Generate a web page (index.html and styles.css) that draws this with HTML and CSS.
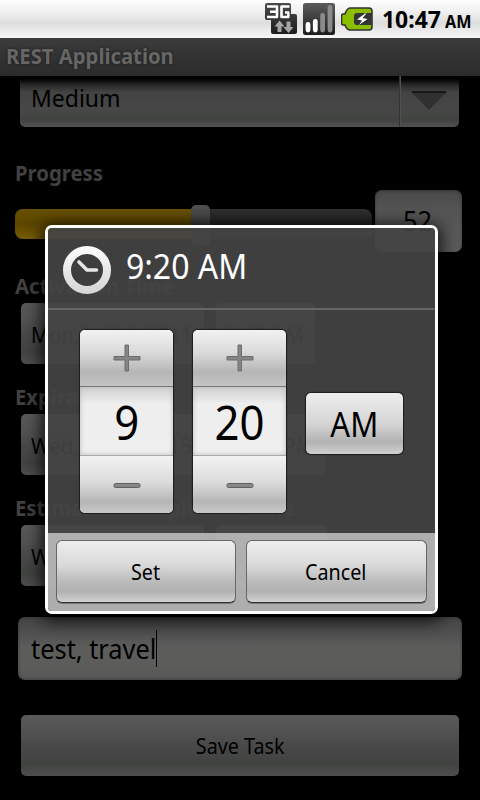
FILE: index.html
```html
<!DOCTYPE html>
<html lang="en">
<head>
<meta charset="utf-8">
<title>REST Application</title>
<link rel="stylesheet" href="styles.css">
</head>
<body>
<div class="phone">
  <header class="status">
    <svg class="status-icon" width="32" height="32" viewBox="0 0 32 32">
      <defs><linearGradient id="net" x2="0" y2="1"><stop offset="0" stop-color="#4c4c4c"/><stop offset="1" stop-color="#1c1c1c"/></linearGradient></defs>
      <path d="M2 0h22q2 0 2 2v9h4q2 0 2 2v16q0 2-2 2H8q-2 0-2-2v-12H2q-2 0-2-2V2q0-2 2-2z" fill="url(#net)"/>
      <path d="M2 3.500h10v10.500H2M5 8.700h7M24.500 3.500h-8v10.500h6.800v-4.500h-3.300" fill="none" stroke="#fff" stroke-width="2.600" stroke-linejoin="round"/>
      <path d="M14.500 17.500l5 6h-3v5.500h-4v-5.500h-3zM23.500 30l-5-6h3v-5.500h4v5.500h3z" fill="#a6a6a6"/>
    </svg>
    <svg class="status-icon" width="32" height="32" viewBox="0 0 32 32">
      <defs><linearGradient id="sig" x2="0" y2="1"><stop offset="0" stop-color="#5c5c5c"/><stop offset="1" stop-color="#1c1c1c"/></linearGradient></defs>
      <rect width="32" height="32" rx="2.500" fill="url(#sig)"/>
      <g stroke-width="4.800" stroke-linecap="round"><path d="M5 21.500v5.500M12.300 18.500v8.500" stroke="#fff"/><path d="M19.600 12.500v14.500M27 4.500v22.500" stroke="#8b8b8b"/></g>
    </svg>
    <svg class="battery" width="33" height="24" viewBox="0 0 33 24">
      <path d="M9 1h19q3 0 3 3v16q0 3-3 3H9q-3 0-5-5H2.500q-2 0-2-2V9q0-2 2-2H4q2-6 5-6z" fill="#8bbd00" stroke="#333" stroke-width="1.600"/>
      <path d="M16 6h15v12H16q-3 0-3-3V9q0-3 3-3z" fill="#343434"/>
      <path d="M24 6.500l-8 6 5 1-3 4.500 8.500-6-5-1 4-4.500z" fill="#fff"/>
    </svg>
    <span class="clock"><span class="t">10:47</span></span><span class="ampm"><span class="t">AM</span></span>
  </header>
  <div class="titlebar"><span class="t title">REST Application</span></div>
  <main class="form">
    <div class="spinner">
      <span class="t">Medium</span>
      <div class="spinner-arrow"><svg width="34" height="19" viewBox="0 0 34 19"><path d="M0 0h34v2L17 19 0 2z" fill="#303030"/><path d="M0 1h34" stroke="#171717" stroke-width="2"/></svg></div>
    </div>
    <div class="label l-progress"><span class="t">Progress</span></div>
    <div class="progress-row">
      <div class="seek"><div class="fill"></div><div class="thumb"></div></div>
      <div class="num"><span class="t">52</span></div>
    </div>
    <div class="label l-act"><span class="t">Activation Time</span></div>
    <div class="row"><div class="btn date"><span class="t">Mon, Jul 11, 2011</span></div><div class="btn time-a"><span class="t">9:00 AM</span></div></div>
    <div class="label"><span class="t">Expiration Time</span></div>
    <div class="row"><div class="btn date"><span class="t">Wed, Jul 15, 2015</span></div><div class="btn time-b"><span class="t">12:45 PM</span></div></div>
    <div class="label"><span class="t">Estimated Completion Time</span></div>
    <div class="row"><div class="btn date"><span class="t">Wed, Jul 13, 2011</span></div><div class="btn time-c"><span class="t">10:00 AM</span></div></div>
    <div class="input"><span class="t input-text">test, travel</span><i class="caret"></i></div>
    <div class="btn save"><span class="t">Save Task</span></div>
  </main>
  <section class="dialog">
    <div class="dialog-head">
      <svg width="48" height="48" viewBox="0 0 48 48">
        <defs><linearGradient id="ring" x2="0" y2="1"><stop offset="0" stop-color="#fafafa"/><stop offset="1" stop-color="#d8d8d8"/></linearGradient></defs>
        <circle cx="24" cy="24" r="20" fill="#3d3d3d" stroke="url(#ring)" stroke-width="8"/>
        <path d="M16 16l8 8h9.500" fill="none" stroke="#e6e6e6" stroke-width="3.600" stroke-linecap="round" stroke-linejoin="round"/>
      </svg>
      <span class="t dialog-title">9:20 AM</span>
    </div>
    <div class="dialog-body">
      <div class="picker">
        <div class="step plus"><svg width="28" height="28" viewBox="0 0 28 28"><path d="M12 1h3.500v11.500H27v3.500H15.500V27H12V16H1v-3.500h11z" fill="#858585" stroke="#6c6c6c" stroke-linejoin="round"/></svg></div>
        <div class="value"><span class="t">9</span></div>
        <div class="step minus"><svg width="28" height="6" viewBox="0 0 28 6"><rect x="1" y=".5" width="26" height="4" rx="1.500" fill="#888" stroke="#606060"/></svg></div>
      </div>
      <div class="picker">
        <div class="step plus"><svg width="28" height="28" viewBox="0 0 28 28"><path d="M12 1h3.500v11.500H27v3.500H15.500V27H12V16H1v-3.500h11z" fill="#858585" stroke="#6c6c6c" stroke-linejoin="round"/></svg></div>
        <div class="value"><span class="t">20</span></div>
        <div class="step minus"><svg width="28" height="6" viewBox="0 0 28 6"><rect x="1" y=".5" width="26" height="4" rx="1.500" fill="#888" stroke="#606060"/></svg></div>
      </div>
      <div class="toggle"><span class="t">AM</span></div>
    </div>
    <div class="dialog-foot">
      <div class="action set"><span class="t">Set</span></div>
      <div class="action cancel"><span class="t">Cancel</span></div>
    </div>
  </section>
</div>
</body>
</html>
```

FILE: styles.css
```css
* { box-sizing: border-box; }
body { margin: 0; background: #000; font-family: "Noto Sans", "Open Sans", sans-serif; }
svg { display: block; flex: none; }
.phone { position: relative; width: 480px; height: 800px; overflow: hidden; background: #000; display: flex; flex-direction: column; }
.t { display: inline-block; white-space: nowrap; transform: scaleX(.94); transform-origin: left center; }

.status { height: 38px; flex: none; display: flex; align-items: center; padding-left: 265px; background: linear-gradient(#fff, #ebebeb 40%, #dedede 60%, #f6f6f6); color: #000; font-weight: 700; }
.status-icon { margin-right: 6px; }
.battery { margin-right: 8px; }
.clock { width: 63px; font-size: 24px; line-height: 38px; }
.clock .t { transform: scaleX(.955); }
.ampm { font-size: 17px; line-height: 38px; padding-top: 6px; }
.ampm .t { transform: scaleX(.95); }

.titlebar { height: 38px; flex: none; padding-left: 6px; background: linear-gradient(#3b3b3b, #2b2b2b); color: #666; font-size: 21px; line-height: 37px; font-weight: 700; text-shadow: 0 0 3px #1a1a1a; }
.title { transform: scaleX(.965); }

.form { height: 724px; overflow: hidden; display: flex; flex-direction: column; color: #000; }
.spinner { flex: none; height: 51px; margin: 0 21px 0 20px; padding-left: 11px; border-radius: 0 0 5px 5px; display: flex; justify-content: space-between; font-size: 24px; line-height: 44px; background: linear-gradient(#000 3px, #282828 9px, #434343 16px, #474747 34px, #404340 44px, #4e4e4e 50px, #565656); }
.spinner .t { transform: scaleX(.957); }
.spinner-arrow { width: 60px; border-left: 1px solid #343434; box-shadow: inset 1px 0 #515151; padding: 15px 0 0 12px; }
.label { flex: none; height: 50px; padding: 21px 0 0 15px; color: #414141; font-size: 21px; font-weight: 700; line-height: 24px; }
.label .t { transform: scaleX(.967); }
.l-progress { height: 63px; padding-top: 34px; }
.progress-row { flex: none; height: 62px; display: flex; gap: 3px; padding-left: 15px; }
.seek { width: 357px; height: 30px; margin-top: 19px; border-radius: 8px; background: linear-gradient(#303030, #222 50%, #343434); display: flex; align-items: center; }
.fill { width: 176px; height: 30px; border-radius: 8px 0 0 8px; background: linear-gradient(#695100, #5b4600 50%, #785d00); }
.thumb { width: 19px; height: 40px; margin-top: 2px; border-radius: 5px; background: linear-gradient(#515151, #3d3d3d 50%, #505050); }
.num { width: 87px; height: 62px; border-radius: 7px; background: linear-gradient(#494949, #555 35%, #5c5c5c); padding-left: 28px; font-size: 27px; line-height: 62px; box-shadow: inset 0 1px 3px #333; }
.l-act { height: 51px; padding-top: 22px; }
.row { flex: none; height: 61px; display: flex; gap: 12px; padding-left: 21px; }
.btn { height: 61px; border-radius: 5px; background: linear-gradient(#575a57, #515151 30%, #484848 52%, #404340 80%, #4e4e4e); font-size: 22px; line-height: 62px; padding-left: 10px; }
.date { width: 183px; }
.date .t { transform: scaleX(.915); }
.time-a { width: 99px; }
.time-b { width: 109px; }
.time-c { width: 111px; }
.row .btn:last-child .t { transform: scaleX(.93); }
.input { flex: none; height: 63px; margin: 31px 18px 0; padding-left: 13px; border-radius: 7px; display: flex; align-items: center; font-size: 27px; background: linear-gradient(#444, #525252 30%, #5d5e5c 50%, #5c5d5b 80%, #555); box-shadow: inset 0 0 3px #333; }
.input-text { margin-right: -8px; }
.caret { width: 1px; height: 37px; background: #000; }
.save { flex: none; margin: 35px 21px 0; padding: 0; text-align: center; font-size: 21px; line-height: 63px; }

.dialog { position: absolute; left: 45px; top: 225px; width: 393px; height: 389px; border: 3px solid #fff; border-radius: 7px; box-shadow: 0 3px 16px 4px rgba(0,0,0,.75); display: flex; flex-direction: column; overflow: hidden; color: #fff; }
.dialog-head { height: 82px; flex: none; background: linear-gradient(#666, #666) bottom / 100% 2px no-repeat, rgba(68,68,68,.93); display: flex; align-items: center; padding: 2px 0 0 15px; gap: 15px; font-size: 34px; line-height: 50px; }
.dialog-title { margin-top: -8px; }
.dialog-body { height: 223px; flex: none; display: flex; padding: 20px 0 0 32px; gap: 20px; color: #000; background: rgba(68,68,68,.93); }
.picker { width: 93px; height: 183px; border-radius: 5px; overflow: hidden; box-shadow: 0 0 1px 1px #1c1c1c; background: #eee; }
.step { display: flex; align-items: center; justify-content: center; }
.plus { height: 57px; border-bottom: 1px solid #777; background: linear-gradient(#f2f2f2, #dadada 40%, #b6b6b6 75%, #c4c4c4); }
.minus { height: 58px; border-top: 1px solid #aaa; background: linear-gradient(#f2f2f2, #dcdcdc 45%, #b6b6b6 80%, #c8c8c8); padding-top: 2px; }
.value { height: 68px; text-align: center; font-size: 48px; line-height: 70px; background: linear-gradient(#d0d0d0, #eee 25%, #efefef); box-shadow: inset 0 0 5px #bbb; }
.toggle { width: 97px; height: 61px; margin-top: 63px; border-radius: 5px; text-align: center; font-size: 34px; line-height: 63px; box-shadow: 0 0 1px 1px #1c1c1c; background: linear-gradient(#eee, #d5d5d5 50%, #b2b2b2 80%, #d0d0d0); }
.dialog-foot { height: 78px; flex: none; display: flex; gap: 10px; padding: 7px 8px; background: rgba(180,180,180,.97); color: #000; }
.action { height: 63px; border: 1px solid #666; border-bottom: 1px solid #333; box-shadow: 0 1px #777; border-radius: 6px; text-align: center; font-size: 21px; line-height: 62px; background: linear-gradient(#eee, #d9d9d9 40%, #bcbcbc 65%, #b0b0b0 82%, #d2d2d2); }
.set { width: 180px; padding-right: 1px; }
.cancel { width: 181px; padding-right: 1px; }
.toggle .t, .value .t, .action .t, .save .t { transform-origin: center; }
.toggle .t, .value .t { transform: scaleX(.91); }
```
